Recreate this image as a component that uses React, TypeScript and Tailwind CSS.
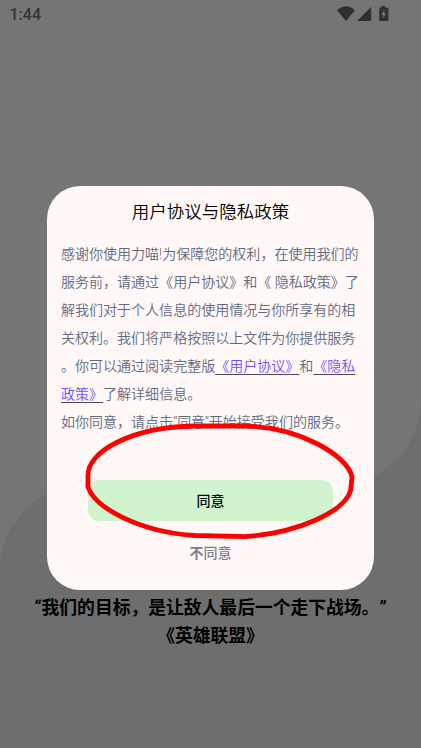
const bodyLines = [
  "感谢你使用力喵!为保障您的权利，在使用我们的",
  "服务前，请通过《用户协议》和《 隐私政策》了",
  "解我们对于个人信息的使用情况与你所享有的相",
  "关权利。我们将严格按照以上文件为你提供服务",
];

function Link({ children }: { children: string }) {
  return (
    <a className="text-[#7350ff] underline decoration-[#51464c] decoration-1 underline-offset-[3px] [text-decoration-skip-ink:none]">
      {children}
    </a>
  );
}

function StatusBar() {
  return (
    <header className="flex h-7 items-center justify-between pr-8 pl-[9.500px]">
      <span className="pt-[2px] font-[Roboto] text-[16px] font-medium text-[#363636]">1:44</span>
      <svg className="h-7 w-[54px]" viewBox="335 0 54 28" fill="#303030">
        <path d="M337 10.2Q346 2.3 355 10.2L346 21Z" />
        <path d="M371.2 6.8V21H357Z" />
        <path
          fillRule="evenodd"
          d="M381.4 6h3.8v1.6h2.2q1 0 1 1V20q0 1-1 1h-7.2q-1 0-1-1V8.600q0-1 1-1h1.2ZM384.300 10L381.300 15H383.100V18.400L386 13.400H384.300Z"
        />
      </svg>
    </header>
  );
}

export default function App() {
  return (
    <div className="relative h-[748px] w-[421px] overflow-hidden bg-[#757575] font-['Roboto','Noto_Sans_CJK_SC',sans-serif] [text-spacing-trim:space-all]">
      <svg className="absolute inset-0 h-full w-full" viewBox="0 0 421 748">
        <path d="M0 748V570A85 85 0 0 1 85 485H336A85 85 0 0 0 421 400V748Z" fill="#6e6e6e" />
      </svg>
      <div className="relative flex h-full flex-col">
        <StatusBar />
        <main className="mt-[158px] ml-[47px] flex h-[403.500px] w-[327px] flex-col rounded-[33px] bg-[#fff8f6] px-[14px] pt-[12px]">
          <h1 className="text-center text-[17.500px] leading-7 font-[350] text-black">用户协议与隐私政策</h1>
          <div className="mt-[14px] text-[14.020px] leading-7 font-[350] whitespace-nowrap text-[#626a82]">
            {bodyLines.map((line) => (
              <p key={line}>{line}</p>
            ))}
            <p>
              。你可以通过阅读完整版<Link>《用户协议》</Link>和<Link>《隐私</Link>
            </p>
            <p>
              <Link>政策》</Link>了解详细信息。
            </p>
            <p>
              如你同意，请点击<span className="tracking-[-0.2px]">“同意”</span>开始接受我们的服务。
            </p>
          </div>
          <button className="mt-[44px] ml-[27px] h-[41px] w-[245px] rounded-[11px] bg-[#d0f4cd] pt-px text-[14px] font-medium text-black">
            同意
          </button>
          <button className="mt-[18px] h-7 text-[14px] font-medium text-[#7a818d]">
            <span className="font-bold">不</span>同意
          </button>
        </main>
        <footer className="mt-[4.500px] text-center text-[17.800px] leading-7 font-bold whitespace-nowrap text-black">
          <p>“我们的目标，是让敌人最后一个走下战场。”</p>
          <p>《英雄联盟》</p>
        </footer>
      </div>
      <svg className="absolute inset-0 h-full w-full" viewBox="0 0 421 748" fill="none">
        <path
          d="M88 475C88 452 130 427 195 426H245C300 427 348 456 352 477L350.700 490C345 512 297 533 245 536.700L195 535.500C140 532 95 508 88 487Z"
          stroke="#ff0000"
          strokeWidth="4.800"
          strokeLinejoin="round"
        />
      </svg>
    </div>
  );
}
